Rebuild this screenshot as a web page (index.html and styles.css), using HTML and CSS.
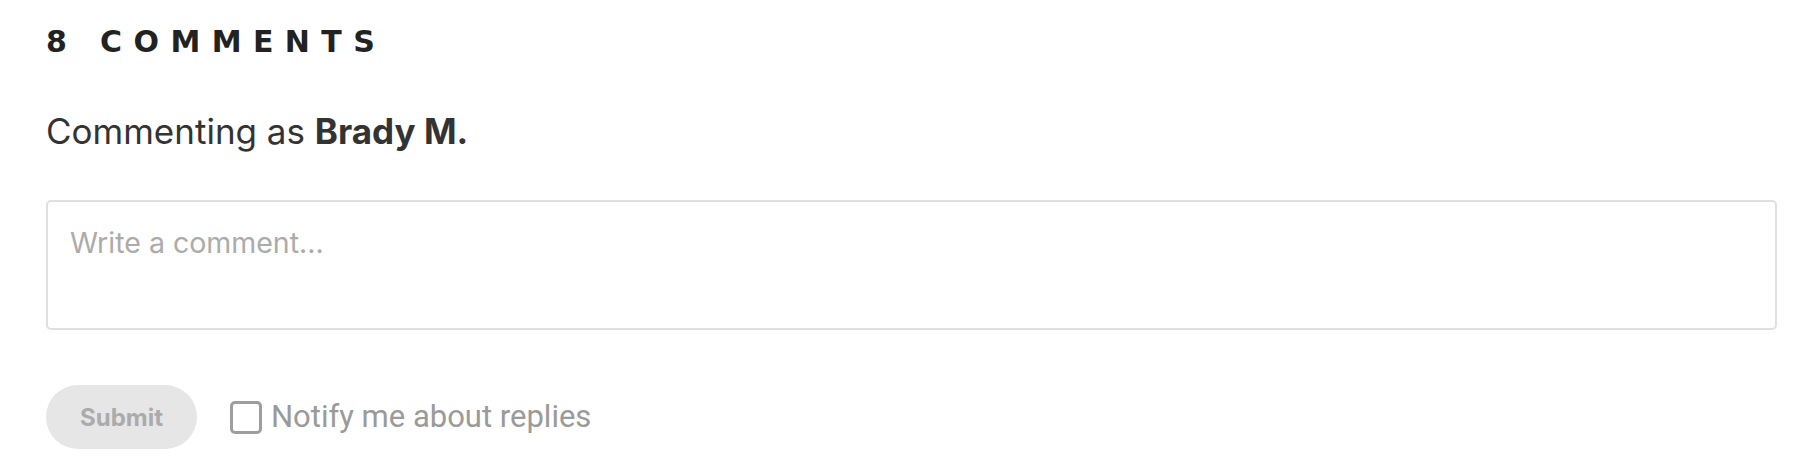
FILE: index.html
```html
<!DOCTYPE html>
<html lang="en">
<head>
<meta charset="utf-8">
<title>Comments</title>
<link rel="stylesheet" href="styles.css">
</head>
<body>
<section class="comments">
  <h2 class="comments-title">8 Comments</h2>
  <p class="commenting-as">Commenting as <strong>Brady M.</strong></p>
  <form class="comment-form">
    <textarea class="comment-input" placeholder="Write a comment..."></textarea>
    <div class="form-actions">
      <button type="button" class="submit-btn" disabled>Submit</button>
      <label class="notify">
        <span class="checkbox"></span>
        <span class="notify-text">Notify me about replies</span>
      </label>
    </div>
  </form>
</section>
</body>
</html>
```

FILE: styles.css
```css
* { box-sizing: border-box; }
html, body { margin: 0; padding: 0; background: #fff; }

.comments {
  padding: 24px 23px 0 46px;
}

.comments-title {
  margin: 0;
  font-family: "DejaVu Sans", sans-serif;
  font-weight: 700;
  font-size: 30px;
  line-height: 36px;
  letter-spacing: 11.4px;
  text-transform: uppercase;
  color: #222;
}

.commenting-as {
  margin: 50px 0 0;
  font-family: Inter, sans-serif;
  font-size: 35px;
  line-height: 42px;
  color: #333;
}
.commenting-as strong { font-weight: 700; color: #333; }

.comment-form { margin-top: 48px; }

.comment-input {
  display: block;
  width: 100%;
  height: 130px;
  margin: 0;
  padding: 24px 22px;
  border: 2px solid #e0e0e0;
  border-radius: 5px;
  resize: none;
  font-family: Inter, sans-serif;
  font-size: 28.5px;
  line-height: 34px;
  color: #333;
  background: #fff;
}
.comment-input::placeholder { color: #ababab; }

.form-actions {
  display: flex;
  align-items: center;
  margin-top: 55px;
}

.submit-btn {
  width: 151px;
  height: 64px;
  border: 0;
  border-radius: 32px;
  background: #e6e6e6;
  color: #ababab;
  font-family: Inter, sans-serif;
  font-weight: 700;
  font-size: 24px;
  padding: 0;
}

.notify {
  display: flex;
  align-items: center;
  margin-left: 33px;
}

.checkbox {
  width: 32px;
  height: 33px;
  border: 3px solid #9e9e9e;
  border-radius: 5px;
  flex: none;
}

.notify-text {
  margin-left: 9px;
  font-family: Roboto, sans-serif;
  font-size: 31px;
  line-height: 36px;
  color: #9a9a9a;
}
```
